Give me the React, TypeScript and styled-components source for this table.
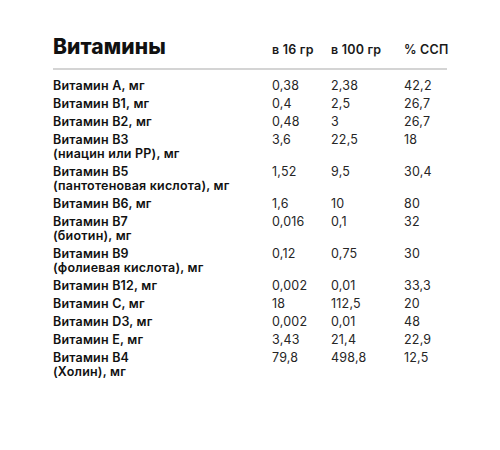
import React from "react";
import styled, { createGlobalStyle } from "styled-components";

const GlobalStyle = createGlobalStyle`
  html, body {
    margin: 0;
    padding: 0;
    background: #ffffff;
  }
  body {
    font-family: Inter, "Noto Sans", "Liberation Sans", sans-serif;
    color: #111111;
  }
`;

const Wrapper = styled.div`
  width: 394px;
  margin: 0 auto;
  padding-top: 34px;
`;

const Head = styled.div`
  display: grid;
  grid-template-columns: 219px 59px 73px 1fr;
  align-items: baseline;
  padding-bottom: 9px;
  border-bottom: 2px solid #d4d4d4;
`;

const Title = styled.h2`
  margin: 0;
  font-size: 21px;
  line-height: 25px;
  font-weight: 800;
  color: #111111;
  letter-spacing: 0.1px;
`;

const HeadCell = styled.div`
  font-size: 12.5px;
  font-weight: 600;
  letter-spacing: 0.2px;
  color: #1a1a1a;
  white-space: nowrap;
`;

const Body = styled.div`
  display: grid;
  grid-template-columns: 219px 59px 73px 1fr;
  row-gap: 4px;
  padding-top: 9px;
`;

const Cell = styled.div<{ $bold?: boolean }>`
  font-size: 12.5px;
  line-height: 14px;
  letter-spacing: 0.2px;
  font-weight: ${(p) => (p.$bold ? 600 : 400)};
  color: ${(p) => (p.$bold ? "#111111" : "#262626")};
  white-space: nowrap;
`;

type Row = { name: string[]; a: string; b: string; c: string };

const rows: Row[] = [
  { name: ["Витамин А, мг"], a: "0,38", b: "2,38", c: "42,2" },
  { name: ["Витамин B1, мг"], a: "0,4", b: "2,5", c: "26,7" },
  { name: ["Витамин B2, мг"], a: "0,48", b: "3", c: "26,7" },
  { name: ["Витамин B3", "(ниацин или PP), мг"], a: "3,6", b: "22,5", c: "18" },
  { name: ["Витамин B5", "(пантотеновая кислота), мг"], a: "1,52", b: "9,5", c: "30,4" },
  { name: ["Витамин B6, мг"], a: "1,6", b: "10", c: "80" },
  { name: ["Витамин B7", "(биотин), мг"], a: "0,016", b: "0,1", c: "32" },
  { name: ["Витамин B9", "(фолиевая кислота), мг"], a: "0,12", b: "0,75", c: "30" },
  { name: ["Витамин B12, мг"], a: "0,002", b: "0,01", c: "33,3" },
  { name: ["Витамин C, мг"], a: "18", b: "112,5", c: "20" },
  { name: ["Витамин D3, мг"], a: "0,002", b: "0,01", c: "48" },
  { name: ["Витамин E, мг"], a: "3,43", b: "21,4", c: "22,9" },
  { name: ["Витамин B4", "(Холин), мг"], a: "79,8", b: "498,8", c: "12,5" },
];

const App: React.FC = () => {
  return (
    <>
      <GlobalStyle />
      <Wrapper>
        <Head>
          <Title>Витамины</Title>
          <HeadCell>в 16 гр</HeadCell>
          <HeadCell>в 100 гр</HeadCell>
          <HeadCell>% ССП</HeadCell>
        </Head>
        <Body>
          {rows.map((r) => (
            <React.Fragment key={r.name.join(" ")}>
              <Cell $bold>
                {r.name.map((line, i) => (
                  <div key={i}>{line}</div>
                ))}
              </Cell>
              <Cell>{r.a}</Cell>
              <Cell>{r.b}</Cell>
              <Cell>{r.c}</Cell>
            </React.Fragment>
          ))}
        </Body>
      </Wrapper>
    </>
  );
};

export default App;
